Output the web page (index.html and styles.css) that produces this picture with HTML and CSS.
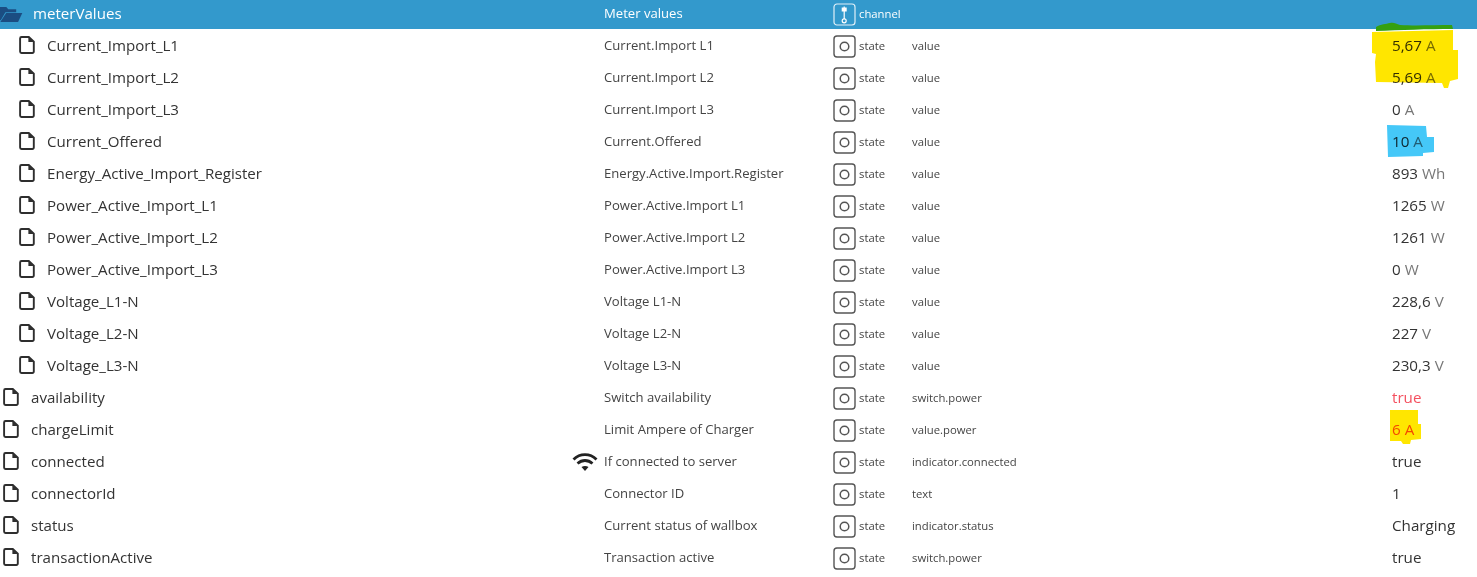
FILE: index.html
```html
<!DOCTYPE html>
<html lang="en">
<head>
<meta charset="utf-8">
<title>Objects</title>
<link rel="stylesheet" href="styles.css">
</head>
<body>
<svg class="defs" width="0" height="0" aria-hidden="true">
  <symbol id="file" viewBox="0 0 16 18"><path d="M2.500 1h7.300L14.800 5.600V15.600a1.400 1.400 0 0 1-1.400 1.400H2.500a1.400 1.400 0 0 1-1.400-1.400V2.400A1.400 1.400 0 0 1 2.500 1Z" fill="none" stroke="#2e2e2e" stroke-width="1.900"/><path d="M9.400 1V6h5.400Z" fill="#2e2e2e"/></symbol>
  <symbol id="state" viewBox="0 0 23 23"><rect x="1" y="1" width="21" height="21" rx="3" fill="none" stroke="#555" stroke-width="1.400"/><circle cx="11.500" cy="11.500" r="4.300" fill="none" stroke="#555" stroke-width="1.500"/></symbol>
</svg>
<main class="tree">
  <div class="row head">
    <div class="name"><svg class="folder" viewBox="0 0 23 16" aria-hidden="true"><path d="M-2 0h8l2 2.500h8.500V5.500H5L0 14H-2Z" fill="#1b4d82"/><path d="M5.800 6.500H23L18.500 16H-.5Z" fill="#1b4d82"/></svg><span>meterValues</span></div>
    <div class="title">Meter values</div>
    <div class="type"><svg class="ticon" viewBox="0 0 23 23" aria-hidden="true"><rect x="1" y="1" width="21" height="21" rx="3" fill="none" stroke="#fff" stroke-opacity=".85" stroke-width="1.200"/><rect x="8.700" y="4.500" width="5" height="4" fill="#fff"/><path d="M11.200 3.500v12.500" stroke="#fff" stroke-width="1.200"/><circle cx="11.200" cy="17.800" r="2" fill="none" stroke="#fff" stroke-width="1.200"/></svg><span>channel</span></div>
    <div class="role"></div><div class="value"></div>
  </div>
  <div class="row child"><div class="name"><svg class="file"><use href="#file"/></svg><span>Current_Import_L1</span></div><div class="title">Current.Import L1</div><div class="type"><svg class="ticon"><use href="#state"/></svg><span>state</span></div><div class="role">value</div><div class="value">5,67 <i>A</i></div></div>
  <div class="row child"><div class="name"><svg class="file"><use href="#file"/></svg><span>Current_Import_L2</span></div><div class="title">Current.Import L2</div><div class="type"><svg class="ticon"><use href="#state"/></svg><span>state</span></div><div class="role">value</div><div class="value">5,69 <i>A</i></div></div>
  <div class="row child"><div class="name"><svg class="file"><use href="#file"/></svg><span>Current_Import_L3</span></div><div class="title">Current.Import L3</div><div class="type"><svg class="ticon"><use href="#state"/></svg><span>state</span></div><div class="role">value</div><div class="value">0 <i>A</i></div></div>
  <div class="row child"><div class="name"><svg class="file"><use href="#file"/></svg><span>Current_Offered</span></div><div class="title">Current.Offered</div><div class="type"><svg class="ticon"><use href="#state"/></svg><span>state</span></div><div class="role">value</div><div class="value">10 <i>A</i></div></div>
  <div class="row child"><div class="name"><svg class="file"><use href="#file"/></svg><span>Energy_Active_Import_Register</span></div><div class="title">Energy.Active.Import.Register</div><div class="type"><svg class="ticon"><use href="#state"/></svg><span>state</span></div><div class="role">value</div><div class="value">893 <i>Wh</i></div></div>
  <div class="row child"><div class="name"><svg class="file"><use href="#file"/></svg><span>Power_Active_Import_L1</span></div><div class="title">Power.Active.Import L1</div><div class="type"><svg class="ticon"><use href="#state"/></svg><span>state</span></div><div class="role">value</div><div class="value">1265 <i>W</i></div></div>
  <div class="row child"><div class="name"><svg class="file"><use href="#file"/></svg><span>Power_Active_Import_L2</span></div><div class="title">Power.Active.Import L2</div><div class="type"><svg class="ticon"><use href="#state"/></svg><span>state</span></div><div class="role">value</div><div class="value">1261 <i>W</i></div></div>
  <div class="row child"><div class="name"><svg class="file"><use href="#file"/></svg><span>Power_Active_Import_L3</span></div><div class="title">Power.Active.Import L3</div><div class="type"><svg class="ticon"><use href="#state"/></svg><span>state</span></div><div class="role">value</div><div class="value">0 <i>W</i></div></div>
  <div class="row child"><div class="name"><svg class="file"><use href="#file"/></svg><span>Voltage_L1-N</span></div><div class="title">Voltage L1-N</div><div class="type"><svg class="ticon"><use href="#state"/></svg><span>state</span></div><div class="role">value</div><div class="value">228,6 <i>V</i></div></div>
  <div class="row child"><div class="name"><svg class="file"><use href="#file"/></svg><span>Voltage_L2-N</span></div><div class="title">Voltage L2-N</div><div class="type"><svg class="ticon"><use href="#state"/></svg><span>state</span></div><div class="role">value</div><div class="value">227 <i>V</i></div></div>
  <div class="row child"><div class="name"><svg class="file"><use href="#file"/></svg><span>Voltage_L3-N</span></div><div class="title">Voltage L3-N</div><div class="type"><svg class="ticon"><use href="#state"/></svg><span>state</span></div><div class="role">value</div><div class="value">230,3 <i>V</i></div></div>
  <div class="row"><div class="name"><svg class="file"><use href="#file"/></svg><span>availability</span></div><div class="title">Switch availability</div><div class="type"><svg class="ticon"><use href="#state"/></svg><span>state</span></div><div class="role">switch.power</div><div class="value warn">true</div></div>
  <div class="row"><div class="name"><svg class="file"><use href="#file"/></svg><span>chargeLimit</span></div><div class="title">Limit Ampere of Charger</div><div class="type"><svg class="ticon"><use href="#state"/></svg><span>state</span></div><div class="role">value.power</div><div class="value warn">6 A</div></div>
  <div class="row"><div class="name"><svg class="file"><use href="#file"/></svg><span>connected</span><svg class="wifi" viewBox="0 0 26 20" aria-hidden="true"><path d="M1.500 7.500C8 1 18 1 24.500 7.500" fill="none" stroke="#222" stroke-width="2.800"/><path d="M5.500 11.500C10 7.500 16 7.500 20.500 11.500" fill="none" stroke="#222" stroke-width="2.800"/><path d="M9.500 15C11.500 13.500 14.500 13.500 16.500 15L13 19Z" fill="#222"/></svg></div><div class="title">If connected to server</div><div class="type"><svg class="ticon"><use href="#state"/></svg><span>state</span></div><div class="role">indicator.connected</div><div class="value">true</div></div>
  <div class="row"><div class="name"><svg class="file"><use href="#file"/></svg><span>connectorId</span></div><div class="title">Connector ID</div><div class="type"><svg class="ticon"><use href="#state"/></svg><span>state</span></div><div class="role">text</div><div class="value">1</div></div>
  <div class="row"><div class="name"><svg class="file"><use href="#file"/></svg><span>status</span></div><div class="title">Current status of wallbox</div><div class="type"><svg class="ticon"><use href="#state"/></svg><span>state</span></div><div class="role">indicator.status</div><div class="value">Charging</div></div>
  <div class="row"><div class="name"><svg class="file"><use href="#file"/></svg><span>transactionActive</span></div><div class="title">Transaction active</div><div class="type"><svg class="ticon"><use href="#state"/></svg><span>state</span></div><div class="role">switch.power</div><div class="value">true</div></div>
</main>
<svg class="marker" viewBox="0 0 1477 577" aria-hidden="true">
  <path class="yellow" d="M1372 32L1453 30L1453 50L1458 50L1458 79L1450 81L1448 88H1444L1442 83L1376 82L1375 62L1376 54L1372 53Z"/>
  <path class="blue" d="M1387 125L1426 126L1427 137L1434 137V152L1423 153L1423 156L1388 157Z"/>
  <path class="yellow" d="M1390 410H1418V424H1421V439L1411 440L1410 444H1403L1401 441H1390Z"/>
  <path class="green" d="M1376 27C1381 24 1386 24 1390 23C1394 22 1396 24 1400 25C1415 26 1435 25 1452 25L1453 29C1428 29 1400 30 1376 31Z"/>
</svg>
</body>
</html>
```
FILE: styles.css
```css
html, body {
  margin: 0;
  height: 577px;
  overflow: hidden;
  background: #fff;
}
body {
  position: relative;
  font-family: "Open Sans", "Noto Sans", sans-serif;
  color: #444;
}
.defs { position: absolute; }
.tree { margin-top: -3px; }
.row {
  display: grid;
  grid-template-columns: 604px 229px 79px 480px 1fr;
  height: 32px;
  align-items: center;
  font-size: 13.1px;
}
.name {
  display: flex;
  align-items: center;
  gap: 12px;
  padding-left: 3px;
  font-size: 15.1px;
  color: #333;
  position: relative;
}
.child .name { padding-left: 19px; }
.file { width: 16px; height: 18px; flex: none; }
.folder {
  position: absolute;
  left: 0;
  top: 4px;
  width: 23px;
  height: 15px;
}
.head { background: #3399cc; color: #fff; }
.head .name { padding-left: 33px; color: #fff; }
.title { color: #444; }
.head .title { color: #fff; }
.type {
  display: flex;
  align-items: center;
  gap: 3px;
  font-size: 11.3px;
}
.ticon { width: 23px; height: 23px; flex: none; position: relative; top: 1px; }
.role { font-size: 11.3px; }
.value { font-size: 15.2px; color: #333; }
.value i { font-style: normal; color: #777; }
.warn { color: #f4505f; }
.wifi {
  position: absolute;
  left: 572px;
  top: 1px;
  width: 26px;
  height: 20px;
}
.marker {
  position: absolute;
  left: 0;
  top: 0;
  width: 1477px;
  height: 577px;
  pointer-events: none;
}
.yellow { fill: #ffe600; mix-blend-mode: multiply; }
.blue { fill: #45c8f8; mix-blend-mode: multiply; }
.green { fill: #35a010; }
```
